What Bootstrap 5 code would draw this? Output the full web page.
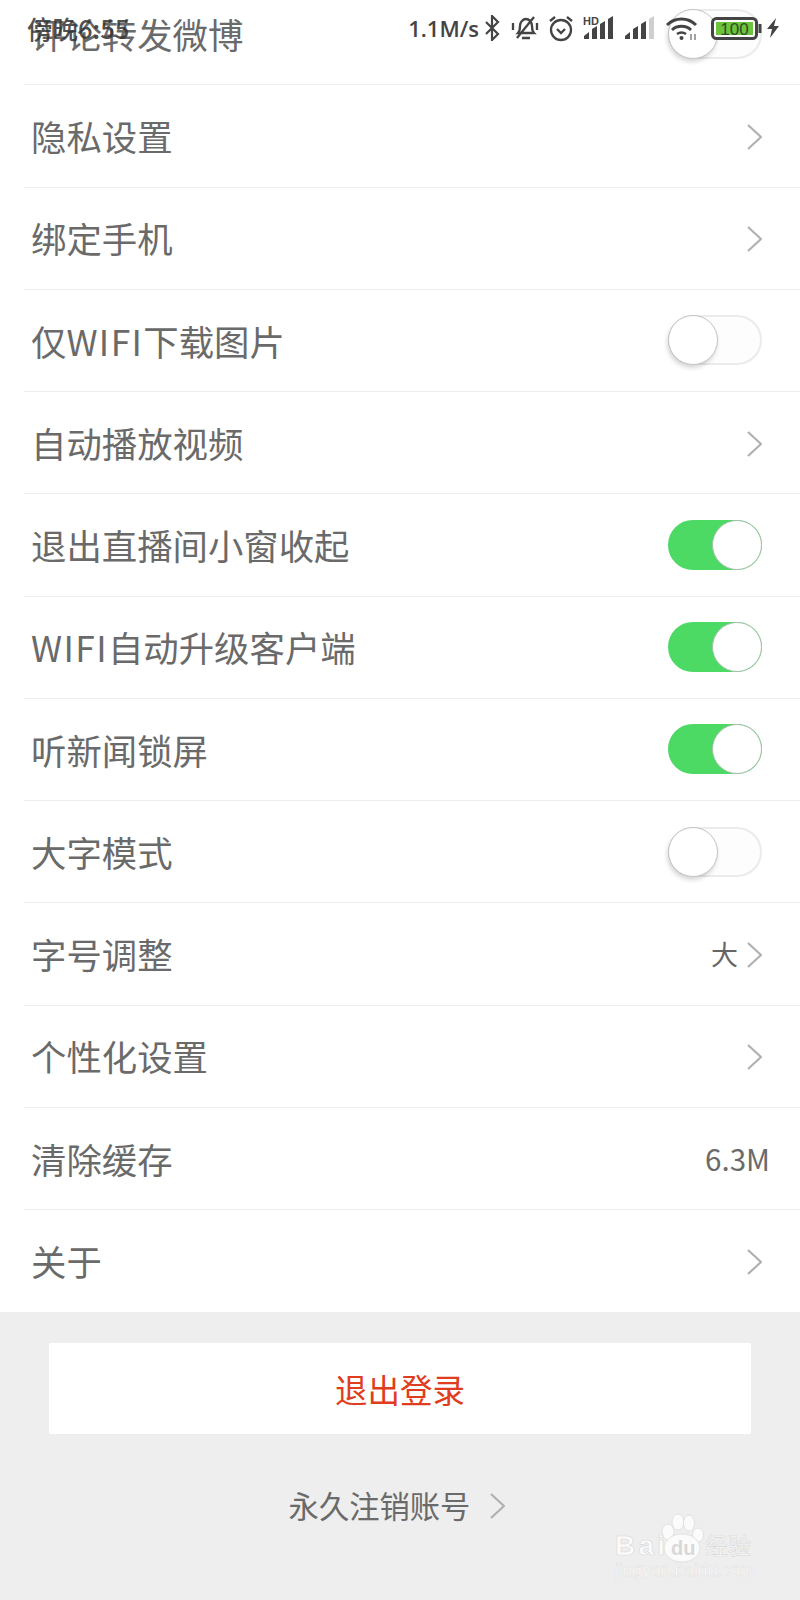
<!DOCTYPE html>
<html lang="zh">
<head>
    <meta charset="UTF-8">
    <title>设置</title>
    <link href="https://cdn.jsdelivr.net/npm/bootstrap@5.3.0/dist/css/bootstrap.min.css" rel="stylesheet">
    <style>
        body { background: #eeeeee; font-family: "Noto Sans CJK SC", "Liberation Sans", sans-serif; color: #666; overflow: hidden; height: 1600px; }
        .screen { width: 800px; height: 1600px; display: flow-root; }
        .set-list { margin-top: -17px; background: #fff; }
        .set-row { height: 102.25px; margin-left: 24px; padding: 0 38px 0 7px; font-size: 35.4px; line-height: 1; color: #6a6a6a; background: transparent; border-color: #ededed; }
        .wifi-txt { letter-spacing: 1.4px; }
        .set-val { font-size: 27px; margin-right: 7px; color: #666; }
        .set-size { font-size: 29.5px; margin-right: -8px; color: #6a6a6a; }
        .tgl { width: 94px; height: 50px; border-radius: 25px; border: 2px solid #ebebeb; background: #fdfdfd; }
        .tgl::after { content: ""; display: block; width: 50px; height: 50px; margin: -2px; border-radius: 50%; background: #fff; border: 1px solid #c4c4c4; box-shadow: -1px 3px 4px rgba(0,0,0,.16); }
        .tgl.on { background: #4cd964; border-color: #4cd964; }
        .tgl.on::after { margin-left: 42px; box-shadow: none; border-color: #a9bfad; }
        .logout-wrap { padding: 31px 49px 0 49px; }
        .logout-btn { height: 91px; font-size: 32.5px; line-height: 1; color: #e03d20; background: #fff; border: 0; border-radius: 2px; padding-bottom: 6px; }
        .logout-btn:hover { color: #e03d20; background: #fff; }
        .cancel-row { margin-top: 56px; font-size: 30.3px; line-height: 1; color: #6a6a6a; gap: 18px; padding-right: 6px; }
        .stat-bar { position: absolute; top: 0; left: 0; width: 800px; height: 56px; padding: 0 20px 0 27px; color: #333; }
        .stat-time { font-size: 25.5px; font-weight: 500; line-height: 1; opacity: .85; }
        .stat-speed { font-family: "Open Sans", sans-serif; font-size: 22px; font-weight: 600; color: #444; line-height: 1; margin-right: -4px; }
        .stat-ico { margin-left: 9px; }
        .stat-ico-bell { margin-left: 11px; }
        .stat-ico-batt { margin-left: 13px; }
        .wm { position: absolute; left: 600px; top: 1500px; }
    </style>
</head>
<body>
<div class="screen position-relative">
    <div class="list-group list-group-flush set-list">
        <div class="list-group-item set-row d-flex align-items-center justify-content-between"><span>评论转发微博</span><span class="tgl"></span></div>
        <div class="list-group-item set-row d-flex align-items-center justify-content-between"><span>隐私设置</span><svg width="17" height="28" viewBox="0 0 17 28"><path d="M3 3l13 12L3 27" fill="none" stroke="#b0b0b0" stroke-width="2.2"/></svg></div>
        <div class="list-group-item set-row d-flex align-items-center justify-content-between"><span>绑定手机</span><svg width="17" height="28" viewBox="0 0 17 28"><path d="M3 3l13 12L3 27" fill="none" stroke="#b0b0b0" stroke-width="2.2"/></svg></div>
        <div class="list-group-item set-row d-flex align-items-center justify-content-between"><span>仅<span class="wifi-txt">WIFI</span>下载图片</span><span class="tgl"></span></div>
        <div class="list-group-item set-row d-flex align-items-center justify-content-between"><span>自动播放视频</span><svg width="17" height="28" viewBox="0 0 17 28"><path d="M3 3l13 12L3 27" fill="none" stroke="#b0b0b0" stroke-width="2.2"/></svg></div>
        <div class="list-group-item set-row d-flex align-items-center justify-content-between"><span>退出直播间小窗收起</span><span class="tgl on"></span></div>
        <div class="list-group-item set-row d-flex align-items-center justify-content-between"><span><span class="wifi-txt">WIFI</span>自动升级客户端</span><span class="tgl on"></span></div>
        <div class="list-group-item set-row d-flex align-items-center justify-content-between"><span>听新闻锁屏</span><span class="tgl on"></span></div>
        <div class="list-group-item set-row d-flex align-items-center justify-content-between"><span>大字模式</span><span class="tgl"></span></div>
        <div class="list-group-item set-row d-flex align-items-center justify-content-between"><span>字号调整</span><span class="d-flex align-items-center"><span class="set-val">大</span><svg width="17" height="28" viewBox="0 0 17 28"><path d="M3 3l13 12L3 27" fill="none" stroke="#b0b0b0" stroke-width="2.2"/></svg></span></div>
        <div class="list-group-item set-row d-flex align-items-center justify-content-between"><span>个性化设置</span><svg width="17" height="28" viewBox="0 0 17 28"><path d="M3 3l13 12L3 27" fill="none" stroke="#b0b0b0" stroke-width="2.2"/></svg></div>
        <div class="list-group-item set-row d-flex align-items-center justify-content-between"><span>清除缓存</span><span class="set-size">6.3M</span></div>
        <div class="list-group-item set-row d-flex align-items-center justify-content-between"><span>关于</span><svg width="17" height="28" viewBox="0 0 17 28"><path d="M3 3l13 12L3 27" fill="none" stroke="#b0b0b0" stroke-width="2.2"/></svg></div>
    </div>

    <div class="logout-wrap">
        <button class="btn w-100 logout-btn" type="button">退出登录</button>
    </div>
    <div class="cancel-row d-flex justify-content-center align-items-center">
        <span>永久注销账号</span>
        <svg width="17" height="28" viewBox="0 0 17 28"><path d="M3 3l13 12L3 27" fill="none" stroke="#b0b0b0" stroke-width="2.2"/></svg>
    </div>

    <!-- status bar sits over the scrolled list -->
    <div class="stat-bar d-flex align-items-center justify-content-between">
        <span class="stat-time">傍晚6:55</span>
        <div class="d-flex align-items-center">
            <span class="stat-speed">1.1M/s</span>
            <svg width="16" height="26" viewBox="0 0 16 26" class="stat-ico"><path d="M2 7l12 12-6 6V1l6 6L2 19" fill="none" stroke="#444" stroke-width="2.2"/></svg>
            <svg width="28" height="26" viewBox="0 0 28 26" class="stat-ico-bell"><path d="M7 18c2-2 2-4 2-7 0-4 3-7 6-7s6 3 6 7c0 3 0 5 2 7zM11 23h8M6 23L23 2M2 8v7M26 8v7" fill="none" stroke="#444" stroke-width="2.3"/></svg>
            <svg width="26" height="27" viewBox="0 0 26 27" class="stat-ico"><circle cx="13" cy="15" r="10" fill="none" stroke="#444" stroke-width="2.3"/><path d="M9 14l4 4 4-4M2 6l5-4M24 6l-5-4" fill="none" stroke="#444" stroke-width="2.3"/></svg>
            <svg width="32" height="24" viewBox="0 0 32 24" class="stat-ico"><text x="0" y="9" font-size="11" font-weight="700" font-family="Liberation Sans" fill="#444">HD</text><path d="M1 23v-3l5-4v7zM9 23V13l5-3v13zM17 23V8l5-3v18zM25 23V3l5-3v23z" fill="#444"/></svg>
            <svg width="32" height="24" viewBox="0 0 32 24" class="stat-ico"><path d="M1 23v-3l5-4v7zM9 23V13l5-3v13zM17 23V8l5-3v18z" fill="#444"/><path d="M25 23V3l5-3v23z" fill="#cfcfcf"/></svg>
            <svg width="33" height="24" viewBox="0 0 33 24" class="stat-ico"><path d="M2 9c8-8 21-8 29 0M7 14c5-5 14-5 19 0" fill="none" stroke="#444" stroke-width="3"/><path d="M12 18c3-2 6-2 9 0" fill="none" stroke="#444" stroke-width="2.6"/><circle cx="16.5" cy="22" r="2" fill="#444"/><path d="M26 18v6M30 18v6" stroke="#666" stroke-width="1.2"/></svg>
            <svg width="51" height="23" viewBox="0 0 51 23" class="stat-ico-batt"><rect x="1.5" y="1.5" width="44" height="20" rx="4" fill="#fff" stroke="#444" stroke-width="3"/><rect x="5" y="5" width="37" height="13" fill="#6cc43c"/><rect x="47.5" y="7" width="3" height="9" fill="#444"/><text x="23.5" y="17.5" text-anchor="middle" font-size="17" font-family="Liberation Sans" fill="#2f4a22">100</text></svg>
            <svg width="14" height="24" viewBox="0 0 14 24" class="ms-1"><path d="M10 2L1 13h5l-2 9 9-12H8z" fill="#444"/></svg>
        </div>
    </div>

    <!-- baidu jingyan watermark -->
    <svg class="wm" width="170" height="90" viewBox="0 0 170 90">
        <g fill="#fbfbfb" stroke="#d8d8d8" stroke-width=".7">
            <ellipse cx="68" cy="32" rx="6" ry="8"/>
            <ellipse cx="78" cy="22" rx="6" ry="8"/>
            <ellipse cx="89" cy="23" rx="5.5" ry="8"/>
            <ellipse cx="98" cy="35" rx="5.5" ry="7"/>
            <ellipse cx="82" cy="48" rx="18" ry="14"/>
        </g>
        <text x="15" y="55" font-size="28" font-weight="700" font-family="Liberation Sans" fill="#fbfbfb" stroke="#d8d8d8" stroke-width=".6" textLength="50">Bai</text>
        <text x="71" y="55" font-size="20" font-weight="700" font-family="Liberation Sans" fill="#d8d8d8">du</text>
        <text x="105" y="54" font-size="23" font-family="Noto Sans CJK SC" fill="#fbfbfb" stroke="#d8d8d8" stroke-width=".6">经验</text>
        <text x="15" y="76" font-size="18" font-family="Liberation Sans" fill="#fbfbfb" stroke="#dcdcdc" stroke-width=".4" textLength="140">jingyan.baidu.com</text>
    </svg>
</div>
<script src="https://cdn.jsdelivr.net/npm/bootstrap@5.3.0/dist/js/bootstrap.bundle.min.js"></script>
</body>
</html>
